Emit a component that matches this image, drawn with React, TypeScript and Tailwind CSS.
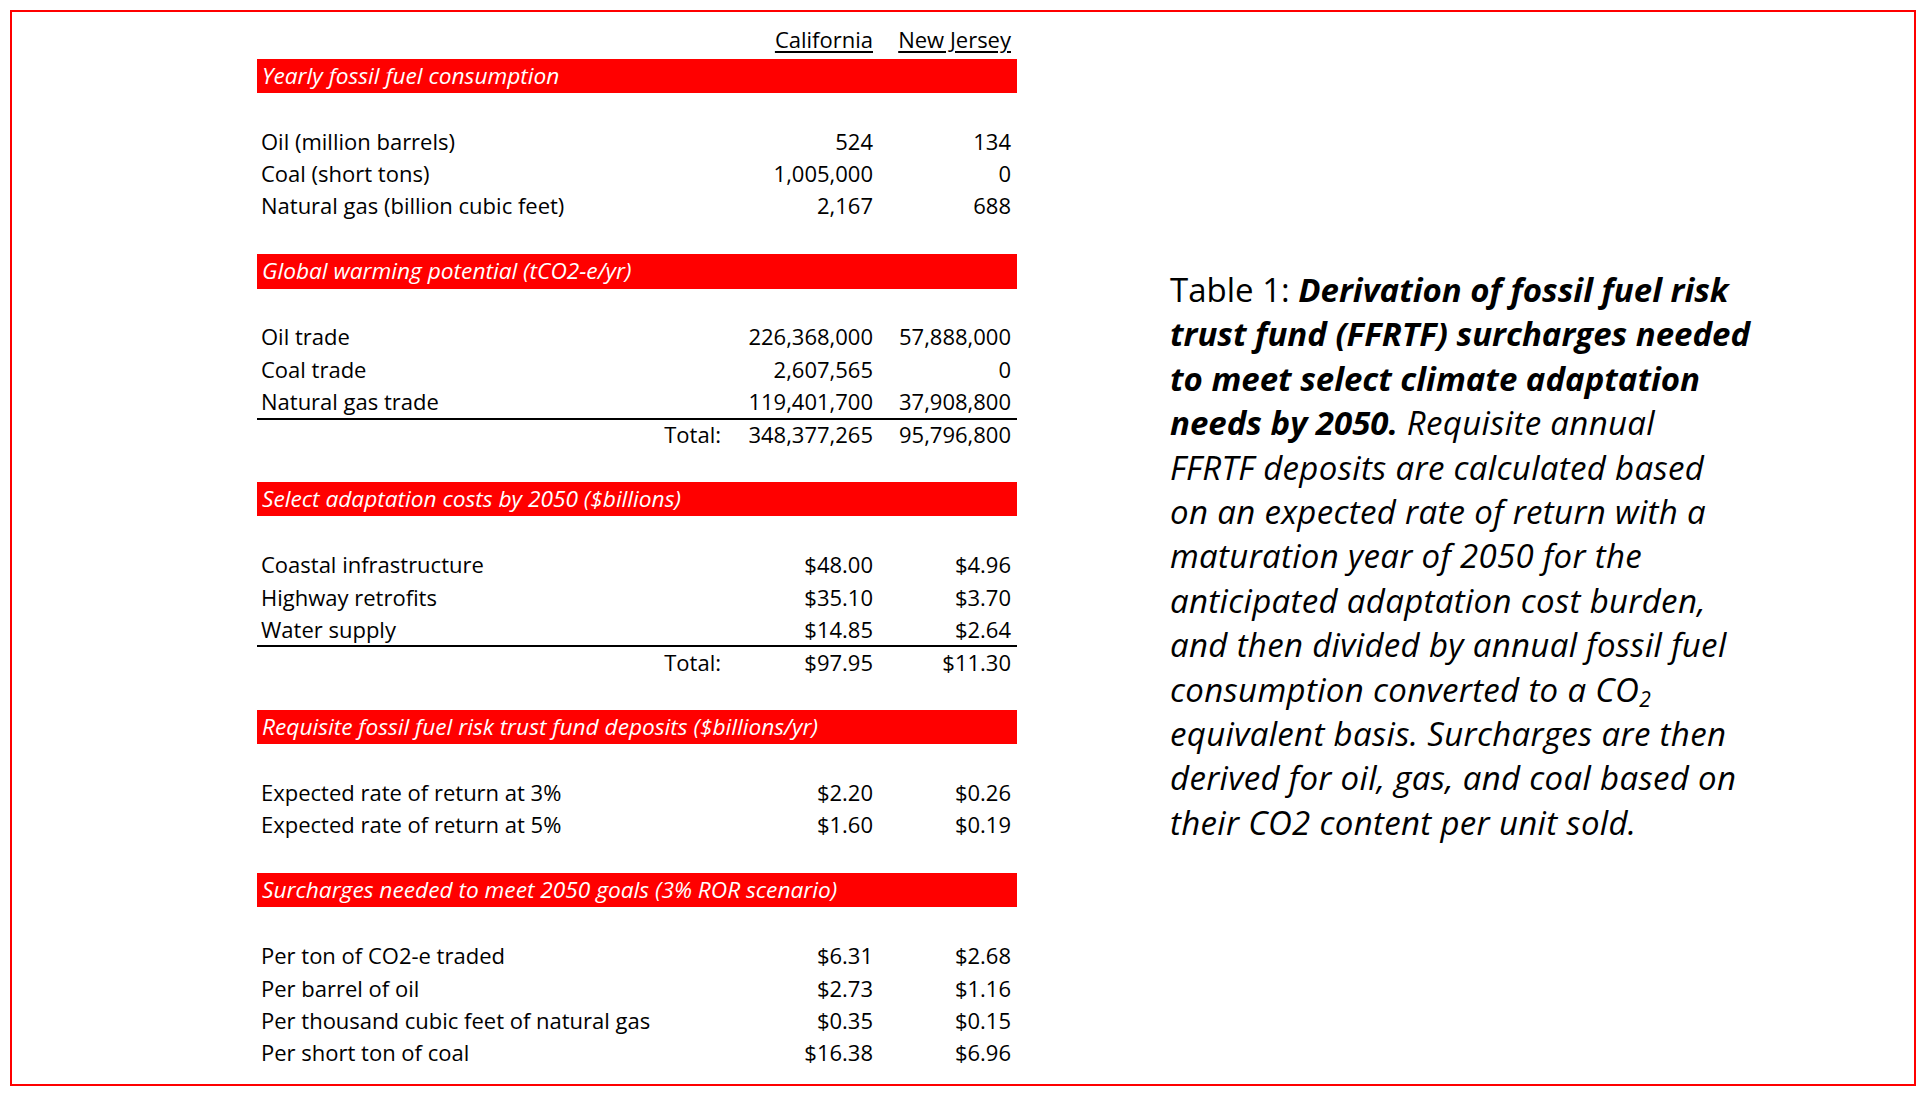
type Row = [string, string, string];

type Section = {
  title: string;
  rows: Row[];
  total?: [string, string];
};

const sections: Section[] = [
  {
    title: "Yearly fossil fuel consumption",
    rows: [
      ["Oil (million barrels)", "524", "134"],
      ["Coal (short tons)", "1,005,000", "0"],
      ["Natural gas (billion cubic feet)", "2,167", "688"],
    ],
  },
  {
    title: "Global warming potential (tCO2-e/yr)",
    rows: [
      ["Oil trade", "226,368,000", "57,888,000"],
      ["Coal trade", "2,607,565", "0"],
      ["Natural gas trade", "119,401,700", "37,908,800"],
    ],
    total: ["348,377,265", "95,796,800"],
  },
  {
    title: "Select adaptation costs by 2050 ($billions)",
    rows: [
      ["Coastal infrastructure", "$48.00", "$4.96"],
      ["Highway retrofits", "$35.10", "$3.70"],
      ["Water supply", "$14.85", "$2.64"],
    ],
    total: ["$97.95", "$11.30"],
  },
  {
    title: "Requisite fossil fuel risk trust fund deposits ($billions/yr)",
    rows: [
      ["Expected rate of return at 3%", "$2.20", "$0.26"],
      ["Expected rate of return at 5%", "$1.60", "$0.19"],
    ],
  },
  {
    title: "Surcharges needed to meet 2050 goals (3% ROR scenario)",
    rows: [
      ["Per ton of CO2-e traded", "$6.31", "$2.68"],
      ["Per barrel of oil", "$2.73", "$1.16"],
      ["Per thousand cubic feet of natural gas", "$0.35", "$0.15"],
      ["Per short ton of coal", "$16.38", "$6.96"],
    ],
  },
];

function DataRow({ label, ca, nj }: { label: string; ca: string; nj: string }) {
  return (
    <div className="flex h-[32.25px] items-center pl-[4px] pr-[6px]">
      <span className="flex-1 whitespace-nowrap">{label}</span>
      <span className="w-[137px] text-right">{ca}</span>
      <span className="w-[138px] text-right">{nj}</span>
    </div>
  );
}

function TableSection({ section, first }: { section: Section; first: boolean }) {
  return (
    <div className="flex flex-col">
      {!first && <div className="h-[32.25px]" />}
      <div className="flex h-[34.3px] items-center whitespace-nowrap bg-[#ff0000] pl-[5px] text-[22.7px] italic text-white">
        {section.title}
      </div>
      <div className="h-[32.25px]" />
      {section.rows.map((r) => (
        <DataRow key={r[0]} label={r[0]} ca={r[1]} nj={r[2]} />
      ))}
      {section.total && (
        <div className="flex h-[32.25px] items-center border-t-2 border-black pl-[4px] pr-[6px]">
          <span className="flex-1 pr-[15px] text-right">Total:</span>
          <span className="w-[137px] text-right">{section.total[0]}</span>
          <span className="w-[138px] text-right">{section.total[1]}</span>
        </div>
      )}
    </div>
  );
}

export default function App() {
  return (
    <div className="h-[1097px] w-[1920px] bg-white p-[10px] font-['Open_Sans',sans-serif] text-black">
      <div className="flex h-[1076px] w-[1906px] border-2 border-[#ff0000]">
        {/* spreadsheet */}
        <div className="ml-[245px] flex w-[760px] flex-col pt-[14.5px] text-[22px]">
          <div className="flex h-[32.25px] items-end pb-[3px] pr-[6px]">
            <span className="flex-1" />
            <span className="w-[137px] text-right">
              <span className="underline underline-offset-[3px]">California</span>
            </span>
            <span className="w-[138px] text-right">
              <span className="underline underline-offset-[3px]">New Jersey</span>
            </span>
          </div>
          {sections.map((s, i) => (
            <TableSection key={s.title} section={s} first={i === 0} />
          ))}
        </div>

        {/* caption */}
        <div className="ml-[153px] pt-[256px] text-[33px] leading-[44.4px]">
          <p className="whitespace-nowrap">
            Table 1: <b className="italic">Derivation of fossil fuel risk</b>
            <br />
            <b className="italic">trust fund (FFRTF) surcharges needed</b>
            <br />
            <b className="italic">to meet select climate adaptation</b>
            <br />
            <b className="italic">needs by 2050.</b>
            <i className="tracking-[0.01em]"> Requisite annual</i>
            <br />
            <i className="tracking-[0.01em]">FFRTF deposits are calculated based</i>
            <br />
            <i className="tracking-[0.01em]">on an expected rate of return with a</i>
            <br />
            <i className="tracking-[0.01em]">maturation year of 2050 for the</i>
            <br />
            <i className="tracking-[0.01em]">anticipated adaptation cost burden,</i>
            <br />
            <i className="tracking-[0.01em]">and then divided by annual fossil fuel</i>
            <br />
            <i className="tracking-[0.01em]">
              consumption converted to a CO<sub className="text-[21px]">2</sub>
            </i>
            <br />
            <i className="tracking-[0.01em]">equivalent basis. Surcharges are then</i>
            <br />
            <i className="tracking-[0.01em]">derived for oil, gas, and coal based on</i>
            <br />
            <i className="tracking-[0.01em]">their CO2 content per unit sold.</i>
          </p>
        </div>
      </div>
    </div>
  );
}
